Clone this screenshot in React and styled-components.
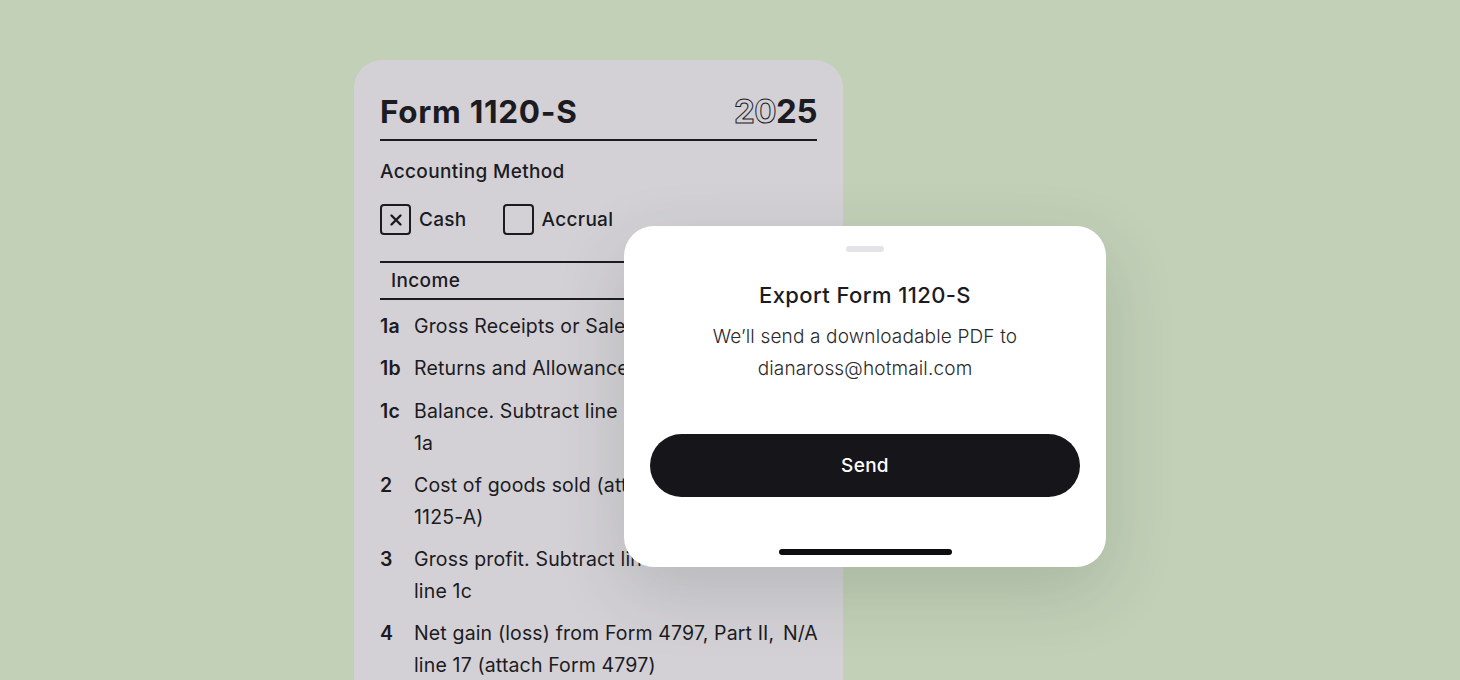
import styled, { createGlobalStyle } from "styled-components";

const GlobalStyle = createGlobalStyle`
  html, body {
    margin: 0;
    padding: 0;
  }
  body {
    font-family: Inter, "Noto Sans", sans-serif;
    color: #1c1b1f;
    -webkit-font-smoothing: antialiased;
  }
`

const Stage = styled.div`
  position: relative;
  width: 1460px;
  height: 680px;
  padding: 60px 0 0 354px;
  box-sizing: border-box;
  overflow: hidden;
  background-color: #c2d0b8;
`
const Scene = styled.div`
  position: relative;
  width: 489px;
`
const FormCard = styled.div`
  width: 489px;
  height: 680px;
  padding: 31px 26px 0;
  box-sizing: border-box;
  border-radius: 28px;
  background-color: #d3d1d6;
`
const FormHeader = styled.div`
  display: flex;
  align-items: baseline;
  justify-content: space-between;
  padding-bottom: 8px;
  border-bottom: 2.5px solid #1c1b1f;
`
const FormTitle = styled.h1`
  margin: 0;
  font-size: 31.5px;
  font-weight: 700;
  letter-spacing: .7px;
`
const Year = styled.span`
  font-size: 33px;
  font-weight: 700;
  letter-spacing: -.5px;
`
const Outline = styled.span`
  color: transparent;
  -webkit-text-stroke: 1px #1c1b1f;
`
const SectionLabel = styled.p`
  margin: 19px 0 0;
  font-size: 19px;
  font-weight: 500;
  letter-spacing: .35px;
`
const Checks = styled.div`
  display: flex;
  gap: 36px;
  margin-top: 21px;
`
const CheckItem = styled.label`
  display: flex;
  align-items: center;
  gap: 8px;
  font-size: 19px;
  font-weight: 500;
  letter-spacing: .3px;
`
const Box = styled.span`
  display: flex;
  align-items: center;
  justify-content: center;
  width: 31px;
  height: 31px;
  box-sizing: border-box;
  border: 2.5px solid #1c1b1f;
  border-radius: 4px;
`
const IncomeHeader = styled.div`
  margin-top: 26px;
  padding: 6px 11px 5px;
  border-top: 2.5px solid #1c1b1f;
  border-bottom: 2.5px solid #1c1b1f;
  font-size: 19px;
  font-weight: 500;
  letter-spacing: .35px;
  line-height: 24px;
`
const Lines = styled.div`
  display: flex;
  flex-direction: column;
  gap: 10.3px;
  margin-top: 10px;
`
const Line = styled.div`
  display: grid;
  grid-template-columns: 34px 1fr 34px;
  font-size: 19.5px;
  letter-spacing: .15px;
  line-height: 32px;
`
const LineNo = styled.span`
  font-weight: 600;
`
const LineText = styled.div`
  display: flex;
  flex-direction: column;
  white-space: nowrap;
`
const LineValue = styled.span`
  text-align: right;
  letter-spacing: 0;
`

const Modal = styled.div`
  position: absolute;
  top: 166px;
  left: 270px;
  width: 482px;
  height: 341px;
  display: flex;
  flex-direction: column;
  align-items: center;
  padding: 20px 26px 0;
  box-sizing: border-box;
  border-radius: 30px;
  background-color: #fff;
  box-shadow: 0 24px 70px rgba(40, 50, 40, .16);
`
const Handle = styled.div`
  width: 38px;
  height: 6px;
  border-radius: 3px;
  background-color: #e3e3e8;
`
const ModalTitle = styled.h2`
  margin: 29px 0 0;
  font-size: 22px;
  font-weight: 500;
  letter-spacing: .4px;
  line-height: 28px;
`
const ModalText = styled.p`
  margin: 12px 0 0;
  font-size: 19px;
  font-weight: 300;
  letter-spacing: .15px;
  line-height: 32px;
  text-align: center;
  color: #2a292d;
`
const SendButton = styled.button`
  width: 100%;
  height: 63px;
  margin-top: 49px;
  border: none;
  border-radius: 32px;
  font-family: inherit;
  font-size: 19px;
  font-weight: 500;
  letter-spacing: .3px;
  color: #fff;
  background-color: #16151a;
`
const HomeBar = styled.div`
  width: 173px;
  height: 6px;
  margin-top: 52px;
  border-radius: 3px;
  background-color: #0d0d10;
`

const lines = [
  { no: '1a', text: ['Gross Receipts or Sales'] },
  { no: '1b', text: ['Returns and Allowances'] },
  { no: '1c', text: ['Balance. Subtract line 1b from line', '1a'] },
  { no: '2', text: ['Cost of goods sold (attach Form', '1125-A)'] },
  { no: '3', text: ['Gross profit. Subtract line 2 from', 'line 1c'] },
  { no: '4', text: ['Net gain (loss) from Form 4797, Part II,', 'line 17 (attach Form 4797)'], value: 'N/A' },
]

const App = () => {
  return (
    <>
      <GlobalStyle />
      <Stage>
        <Scene>
          <FormCard>
            <FormHeader>
              <FormTitle>Form 1120-S</FormTitle>
              <Year><Outline>20</Outline>25</Year>
            </FormHeader>
            <SectionLabel>Accounting Method</SectionLabel>
            <Checks>
              <CheckItem>
                <Box>
                  <svg width="14" height="14" viewBox="0 0 14 14">
                    <path d="M2.5 2.5l9 9M11.5 2.5l-9 9" stroke="#1c1b1f" strokeWidth="2.4" strokeLinecap="round" />
                  </svg>
                </Box>
                Cash
              </CheckItem>
              <CheckItem>
                <Box />
                Accrual
              </CheckItem>
            </Checks>
            <IncomeHeader>Income</IncomeHeader>
            <Lines>
              { lines.map(line => (
                <Line key={ line.no }>
                  <LineNo>{ line.no }</LineNo>
                  <LineText>
                    { line.text.map(part => <span key={ part }>{ part }</span>) }
                  </LineText>
                  <LineValue>{ line.value || '' }</LineValue>
                </Line>
              )) }
            </Lines>
          </FormCard>
          <Modal>
            <Handle />
            <ModalTitle>Export Form 1120-S</ModalTitle>
            <ModalText>
              We’ll send a downloadable PDF to<br />dianaross@hotmail.com
            </ModalText>
            <SendButton>Send</SendButton>
            <HomeBar />
          </Modal>
        </Scene>
      </Stage>
    </>
  )
}

export default App;
